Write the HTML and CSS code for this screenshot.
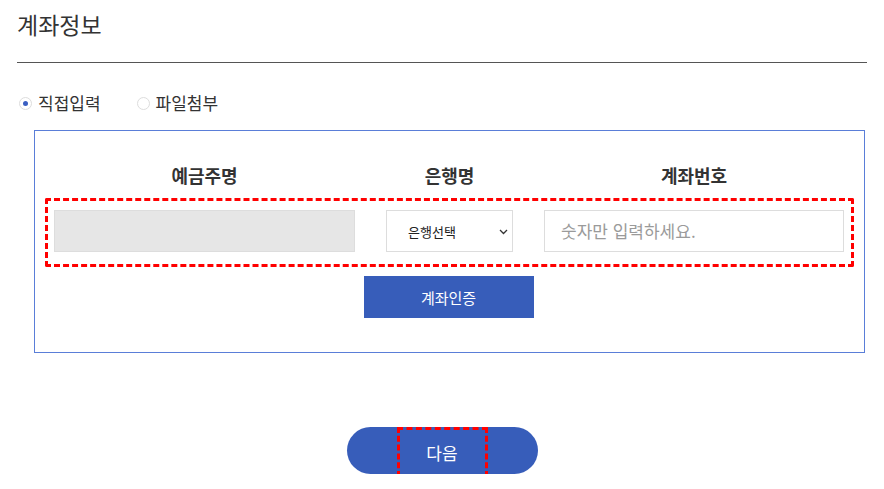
FILE: index.html
```html
<!DOCTYPE html>
<html lang="ko">
<head>
<meta charset="utf-8">
<link rel="stylesheet" href="styles.css">
</head>
<body>
<div class="page">
  <h2 class="title">계좌정보</h2>
  <div class="radios">
    <label class="radio"><span class="dot on"></span>직접입력</label>
    <label class="radio"><span class="dot"></span>파일첨부</label>
  </div>
  <div class="box">
    <div class="heads">
      <div class="head">예금주명</div>
      <div class="head">은행명</div>
      <div class="head">계좌번호</div>
    </div>
    <div class="dashed">
      <div class="field name"></div>
      <div class="field select"><span>은행선택</span>
        <svg class="chev" width="9" height="6" viewBox="0 0 9 6"><path d="M1 1l3.5 3.5L8 1" fill="none" stroke="#333" stroke-width="1.3"/></svg>
      </div>
      <div class="field account">숫자만 입력하세요.</div>
    </div>
    <div class="btnrow"><div class="btn">계좌인증</div></div>
  </div>
  <div class="nextrow">
    <div class="next"><span class="nextlabel">다음</span></div>
  </div>
</div>
</body>
</html>
```
FILE: styles.css
```css
* { box-sizing: border-box; }
body { margin: 0; background: #fff; font-family: "Noto Sans CJK KR", "Noto Sans", sans-serif; color: #333; }
.page { width: 884px; padding: 0 17px; }
.title { margin: 0; font-size: 23px; font-weight: 400; color: #333; line-height: 32px; padding-top: 8px; height: 63px; border-bottom: 1px solid #555; width: 850px; }
.radios { display: flex; align-items: center; padding-top: 30px; padding-left: 2px; font-size: 17px; color: #333; }
.radio { display: flex; align-items: center; gap: 6px; margin-right: 36px; line-height: 20px; }
.dot { width: 13px; height: 13px; border-radius: 50%; border: 1px solid #ddd; display: inline-block; position: relative; background: #fff; }
.dot.on::after { content: ""; position: absolute; width: 5px; height: 5px; border-radius: 50%; background: #3a5fc2; left: 3px; top: 3px; }
.box { margin: 17px 0 0 17px; width: 831px; height: 223px; border: 1px solid #5a7ed8; padding: 0 10px; }
.heads { display: grid; grid-template-columns: 301px 127px 300px; column-gap: 31px; padding: 30px 0 0 9px; height: 67px; }
.head { text-align: center; font-size: 18px; font-weight: 700; color: #333; line-height: 28px; }
.dashed { border: 3px dashed #ff0000; border-radius: 2px; height: 69px; padding: 9px 6px; display: grid; grid-template-columns: 301px 127px 300px; column-gap: 31px; }
.field { height: 42px; border: 1px solid #ddd; }
.name { background: #e6e6e6; }
.select { background: #fff; display: flex; align-items: center; justify-content: space-between; padding: 0 4px 0 21px; font-size: 13px; color: #222; }
.chev { margin-top: 1px; }
.account { background: #fff; font-size: 17px; color: #9a9a9a; padding-left: 16px; line-height: 40px; }
.btnrow { display: flex; justify-content: center; padding-top: 9px; padding-right: 2px; }
.btn { width: 170px; height: 42px; background: #375dba; color: #fff; font-size: 15px; display: flex; align-items: center; justify-content: center; }
.nextrow { display: flex; justify-content: center; padding-top: 74px; }
.next { width: 191px; height: 47px; border-radius: 24px; background: #375dba; display: flex; justify-content: center; }
.nextlabel { width: 91px; height: 50px; border: 3px dashed #ff0000; color: #fff; font-size: 17px; display: flex; align-items: center; justify-content: center; }
```
